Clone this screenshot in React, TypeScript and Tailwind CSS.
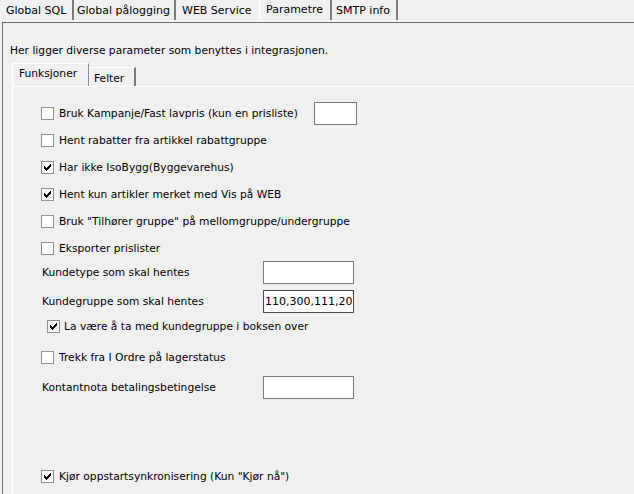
import React from "react";

const Check = ({ checked }: { checked?: boolean }) => (
  <span className="w-[13px] h-[13px] border border-[#8f8f8f] bg-white flex shrink-0 relative">
    {checked && (
      <svg width="7" height="7" viewBox="0 0 7 7" className="absolute left-[2px] top-[2px]" shapeRendering="crispEdges">
        <path
          fill="#000"
          d="M6 0h1v1h-1z M5 1h2v1h-2z M0 2h1v1h-1z M4 2h3v1h-3z M0 3h2v1h-2z M3 3h3v1h-3z M0 4h5v1h-5z M1 5h3v1h-3z M2 6h1v1h-1z"
        />
      </svg>
    )}
  </span>
);

const Row = ({
  checked,
  label,
  className = "",
  children,
}: {
  checked?: boolean;
  label: string;
  className?: string;
  children?: React.ReactNode;
}) => (
  <div className={"flex items-center " + className}>
    <Check checked={checked} />
    <span className="ml-[5px] whitespace-nowrap">{label}</span>
    {children}
  </div>
);

const TextBox = ({ value = "", dark, w = "w-[91px]" }: { value?: string; dark?: boolean; w?: string }) => (
  <div
    className={
      "h-[23px] bg-white border overflow-hidden whitespace-nowrap flex items-center pl-[1px] text-[11px] " +
      w +
      (dark ? " border-[#4a4a4a]" : " border-[#7a7a7a]")
    }
  >
    {value}
  </div>
);

export default function App() {
  const tabs = [
    { label: "Global SQL", w: "w-[74px]", pl: "pl-[6px]" },
    { label: "Global pålogging", w: "w-[102px]", pl: "pl-[3px]" },
    { label: "WEB Service", w: "w-[83px]", pl: "pl-[6px]", noSep: true },
    { label: "Parametre", w: "w-[73px]", pl: "pl-[6px]", active: true },
    { label: "SMTP info", w: "w-[66px]", pl: "pl-[4px]" },
  ];
  return (
    <div className="w-[634px] h-[494px] bg-[#f0f0f0] overflow-hidden flex flex-col text-[10.7px] text-black font-['DejaVu_Sans',Verdana,sans-serif] leading-[13px]">
      {/* top tabs */}
      <div className="h-[21px] flex shrink-0 border-b border-b-[#fcfcfc] text-[11px] leading-[14px]">
        {tabs.map((t) => (
          <div
            key={t.label}
            className={
              "h-[20px] flex " +
              t.w +
              " " +
              t.pl +
              (t.active ? " items-start pt-[3px] border-l border-l-white" : " items-center pt-[1px]") +
              (t.noSep ? "" : " border-r-2 border-r-[#7c7c7c]")
            }
          >
            <span className="whitespace-nowrap">{t.label}</span>
          </div>
        ))}
      </div>
      {/* outer panel */}
      <div className="flex-1 mt-[1px] ml-[2px] border-t border-l border-[#6f6f6f] flex flex-col">
        <div className="pl-[7px] pt-[21px] whitespace-nowrap">Her ligger diverse parameter som benyttes i integrasjonen.</div>
        {/* inner tabs */}
        <div className="ml-[9px] mt-[6px] flex items-end h-[23px]">
          <div className="w-[77px] h-[23px] border-l border-t border-white border-r border-r-[#8a8a8a] pl-[6px] pt-[3px] bg-[#f0f0f0]">
            Funksjoner
          </div>
          <div className="w-[47px] h-[19px] border-l border-t border-white border-r-2 border-r-[#7a7a7a] pl-[4px] pt-[4px]">
            Felter
          </div>
        </div>
        {/* inner panel */}
        <div className="ml-[9px] flex-1 border-t border-l border-white pl-[28px] pt-[13px] flex flex-col">
          <Row label="Bruk Kampanje/Fast lavpris (kun en prisliste)" className="h-[27px]">
            <div className="ml-[16px]">
              <TextBox w="w-[43px]" />
            </div>
          </Row>
          <Row label="Hent rabatter fra artikkel rabattgruppe" className="h-[27px]" />
          <Row checked label="Har ikke IsoBygg(Byggevarehus)" className="h-[27px]" />
          <Row checked label="Hent kun artikler merket med Vis på WEB" className="h-[27px]" />
          <Row label='Bruk "Tilhører gruppe" på mellomgruppe/undergruppe' className="h-[27px]" />
          <Row label="Eksporter prislister" className="h-[26px]" />
          <div className="flex items-center h-[23px]">
            <span className="w-[222px] pl-[1px]">Kundetype som skal hentes</span>
            <TextBox />
          </div>
          <div className="flex items-center h-[23px] mt-[6px]">
            <span className="w-[222px] pl-[1px]">Kundegruppe som skal hentes</span>
            <TextBox dark value="110,300,111,20" />
          </div>
          <div className="flex items-center h-[27px] pl-[6px]">
            <Check checked />
            <span className="ml-[4px] whitespace-nowrap">La være å ta med kundegruppe i boksen over</span>
          </div>
          <Row label="Trekk fra I Ordre på lagerstatus" className="h-[23px] mt-[6px]" />
          <div className="flex items-center h-[23px] mt-[7px]">
            <span className="w-[222px] pl-[1px]">Kontantnota betalingsbetingelse</span>
            <TextBox />
          </div>
          <Row checked label={'Kjør oppstartsynkronisering (Kun "Kjør nå")'} className="h-[13px] mt-[71px]" />
        </div>
      </div>
    </div>
  );
}
